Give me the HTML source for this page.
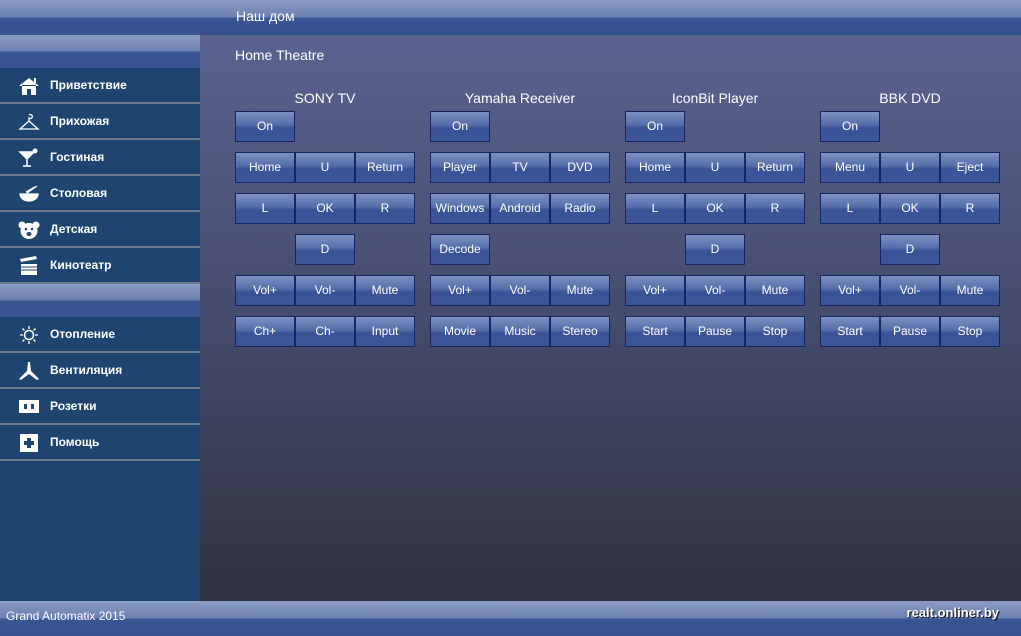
<!DOCTYPE html>
<html><head><meta charset="utf-8"><style>
*{margin:0;padding:0;box-sizing:border-box}
body{width:1021px;height:636px;overflow:hidden;font-family:"Liberation Sans",sans-serif;background:#303340;position:relative}
.bar{position:absolute;background:linear-gradient(#8a9cc4 0%,#6a7fb0 50%,#3a5494 50%,#38528f 100%)}
#top{left:0;top:0;width:1021px;height:35px}
#top span{position:absolute;left:236px;top:8px;color:#fff;font-size:14px}
#side{position:absolute;left:0;top:35px;width:200px;height:566px;background:#1f4470}
#main{position:absolute;left:200px;top:35px;width:821px;height:566px;background:linear-gradient(#5a6390,#454b6c 50%,#30323f)}
.sh{position:absolute;left:0;width:200px;height:33px;background:linear-gradient(#8a9cc4 0%,#6a7fb0 50%,#3a5494 50%,#38528f 100%)}
.it{position:absolute;left:0;width:200px;height:36px;border-bottom:2px solid #6d7a8c;color:#fff;font-weight:bold;font-size:12px}
.it span{position:absolute;left:50px;top:10px}
.it svg{position:absolute;left:18px;top:8px}
#foot{left:0;top:601px;width:1021px;height:35px}
#foot .l{position:absolute;left:6px;top:8px;color:#fff;font-size:12px}
#foot .r{position:absolute;right:22px;top:4px;color:#fff;font-size:13px;font-weight:bold;text-shadow:1px 1px 1px #000}
.ttl{position:absolute;color:#fff;font-size:14px;width:180px;text-align:center}
.b{position:absolute;width:60px;height:31px;border:1px solid #172660;background:linear-gradient(#7d92c4 0%,#546ca8 45%,#3a5296 55%,#3c5598 100%);color:#fff;font-size:12px;text-align:center;line-height:29px}
</style></head><body>
<div id="top" class="bar"><span>Наш дом</span></div>
<div id="side">
<div class="sh" style="top:0"></div>
<div class="it" style="top:33px"><svg width="22" height="20" viewBox="0 0 22 20"><path d="M1 10L11 2 21 10M4 9v10h5v-6h4v6h5V9" fill="#fff"/><rect x="16" y="2" width="2" height="5" fill="#fff"/></svg><span>Приветствие</span></div>
<div class="it" style="top:69px"><svg width="22" height="20" viewBox="0 0 22 20"><path d="M11 3a2 2 0 1 1 0 3v3L2 17h18L11 9" stroke="#fff" stroke-width="1.3" fill="none"/></svg><span>Прихожая</span></div>
<div class="it" style="top:105px"><svg width="22" height="20" viewBox="0 0 22 20"><path d="M2 4h14L9 11zM9 11v7M5 18h8" stroke="#fff" stroke-width="1.5" fill="#fff"/><circle cx="17" cy="3" r="2.5" fill="#fff"/></svg><span>Гостиная</span></div>
<div class="it" style="top:141px"><svg width="22" height="20" viewBox="0 0 22 20"><path d="M2 10h18a9 7 0 0 1-18 0zM9 9l10-7M8 8l9-5" stroke="#fff" stroke-width="1.3" fill="#fff"/></svg><span>Столовая</span></div>
<div class="it" style="top:177px"><svg width="22" height="20" viewBox="0 0 22 20"><circle cx="4" cy="5" r="3.5" fill="#fff"/><circle cx="18" cy="5" r="3.5" fill="#fff"/><ellipse cx="11" cy="11" rx="8.5" ry="8" fill="#fff"/><circle cx="8" cy="9" r="1.3" fill="#1f4470"/><circle cx="14" cy="9" r="1.3" fill="#1f4470"/><ellipse cx="11" cy="14" rx="2.5" ry="2" fill="#1f4470"/></svg><span>Детская</span></div>
<div class="it" style="top:213px"><svg width="22" height="20" viewBox="0 0 22 20"><path d="M2 3l16-3 1 3-16 3zM3 8h16v11H3z" fill="#fff"/><path d="M3 11h16M3 14h16" stroke="#1f4470"/></svg><span>Кинотеатр</span></div>
<div class="sh" style="top:249px"></div>
<div class="it" style="top:282px"><svg width="22" height="20" viewBox="0 0 22 20"><circle cx="11" cy="10" r="4.5" stroke="#fff" stroke-width="1.5" fill="none"/><path d="M11 1v3M11 16v3M2 10h3M17 10h3M4.5 3.5l2 2M15.5 14.5l2 2M4.5 16.5l2-2M15.5 5.5l2-2" stroke="#fff" stroke-width="1.3"/></svg><span>Отопление</span></div>
<div class="it" style="top:318px"><svg width="22" height="20" viewBox="0 0 22 20"><path d="M10 1h2l1 9 8 8-2 1-8-6-8 6-2-1 8-8z" fill="#fff"/></svg><span>Вентиляция</span></div>
<div class="it" style="top:354px"><svg width="22" height="20" viewBox="0 0 22 20"><rect x="1" y="3" width="20" height="13" fill="#fff"/><path d="M6 7h3v5H6M16 7h-3v5h3" fill="#1f4470"/></svg><span>Розетки</span></div>
<div class="it" style="top:390px"><svg width="22" height="20" viewBox="0 0 22 20"><rect x="2" y="1" width="18" height="18" fill="#fff"/><path d="M9 5h4v3h3v4h-3v3H9v-3H6V8h3z" fill="#1f4470"/></svg><span>Помощь</span></div>
</div>
<div id="main">
<div style="position:absolute;left:35px;top:12px;color:#fff;font-size:14px">Home Theatre</div>
</div>
<div id="btns"></div>
<div id="foot" class="bar"><span class="l">Grand Automatix 2015</span><span class="r">realt.onliner.by</span></div>
<div class="ttl" style="left:235px;top:90px">SONY TV</div>
<div class="ttl" style="left:430px;top:90px">Yamaha Receiver</div>
<div class="ttl" style="left:625px;top:90px">IconBit Player</div>
<div class="ttl" style="left:820px;top:90px">BBK DVD</div>

<div class="b" style="left:235px;top:111px">On</div>
<div class="b" style="left:235px;top:152px">Home</div><div class="b" style="left:295px;top:152px">U</div><div class="b" style="left:355px;top:152px">Return</div>
<div class="b" style="left:235px;top:193px">L</div><div class="b" style="left:295px;top:193px">OK</div><div class="b" style="left:355px;top:193px">R</div>
<div class="b" style="left:295px;top:234px">D</div>
<div class="b" style="left:235px;top:275px">Vol+</div><div class="b" style="left:295px;top:275px">Vol-</div><div class="b" style="left:355px;top:275px">Mute</div>
<div class="b" style="left:235px;top:316px">Ch+</div><div class="b" style="left:295px;top:316px">Ch-</div><div class="b" style="left:355px;top:316px">Input</div>

<div class="b" style="left:430px;top:111px">On</div>
<div class="b" style="left:430px;top:152px">Player</div><div class="b" style="left:490px;top:152px">TV</div><div class="b" style="left:550px;top:152px">DVD</div>
<div class="b" style="left:430px;top:193px">Windows</div><div class="b" style="left:490px;top:193px">Android</div><div class="b" style="left:550px;top:193px">Radio</div>
<div class="b" style="left:430px;top:234px">Decode</div>
<div class="b" style="left:430px;top:275px">Vol+</div><div class="b" style="left:490px;top:275px">Vol-</div><div class="b" style="left:550px;top:275px">Mute</div>
<div class="b" style="left:430px;top:316px">Movie</div><div class="b" style="left:490px;top:316px">Music</div><div class="b" style="left:550px;top:316px">Stereo</div>

<div class="b" style="left:625px;top:111px">On</div>
<div class="b" style="left:625px;top:152px">Home</div><div class="b" style="left:685px;top:152px">U</div><div class="b" style="left:745px;top:152px">Return</div>
<div class="b" style="left:625px;top:193px">L</div><div class="b" style="left:685px;top:193px">OK</div><div class="b" style="left:745px;top:193px">R</div>
<div class="b" style="left:685px;top:234px">D</div>
<div class="b" style="left:625px;top:275px">Vol+</div><div class="b" style="left:685px;top:275px">Vol-</div><div class="b" style="left:745px;top:275px">Mute</div>
<div class="b" style="left:625px;top:316px">Start</div><div class="b" style="left:685px;top:316px">Pause</div><div class="b" style="left:745px;top:316px">Stop</div>

<div class="b" style="left:820px;top:111px">On</div>
<div class="b" style="left:820px;top:152px">Menu</div><div class="b" style="left:880px;top:152px">U</div><div class="b" style="left:940px;top:152px">Eject</div>
<div class="b" style="left:820px;top:193px">L</div><div class="b" style="left:880px;top:193px">OK</div><div class="b" style="left:940px;top:193px">R</div>
<div class="b" style="left:880px;top:234px">D</div>
<div class="b" style="left:820px;top:275px">Vol+</div><div class="b" style="left:880px;top:275px">Vol-</div><div class="b" style="left:940px;top:275px">Mute</div>
<div class="b" style="left:820px;top:316px">Start</div><div class="b" style="left:880px;top:316px">Pause</div><div class="b" style="left:940px;top:316px">Stop</div>
</body></html>
